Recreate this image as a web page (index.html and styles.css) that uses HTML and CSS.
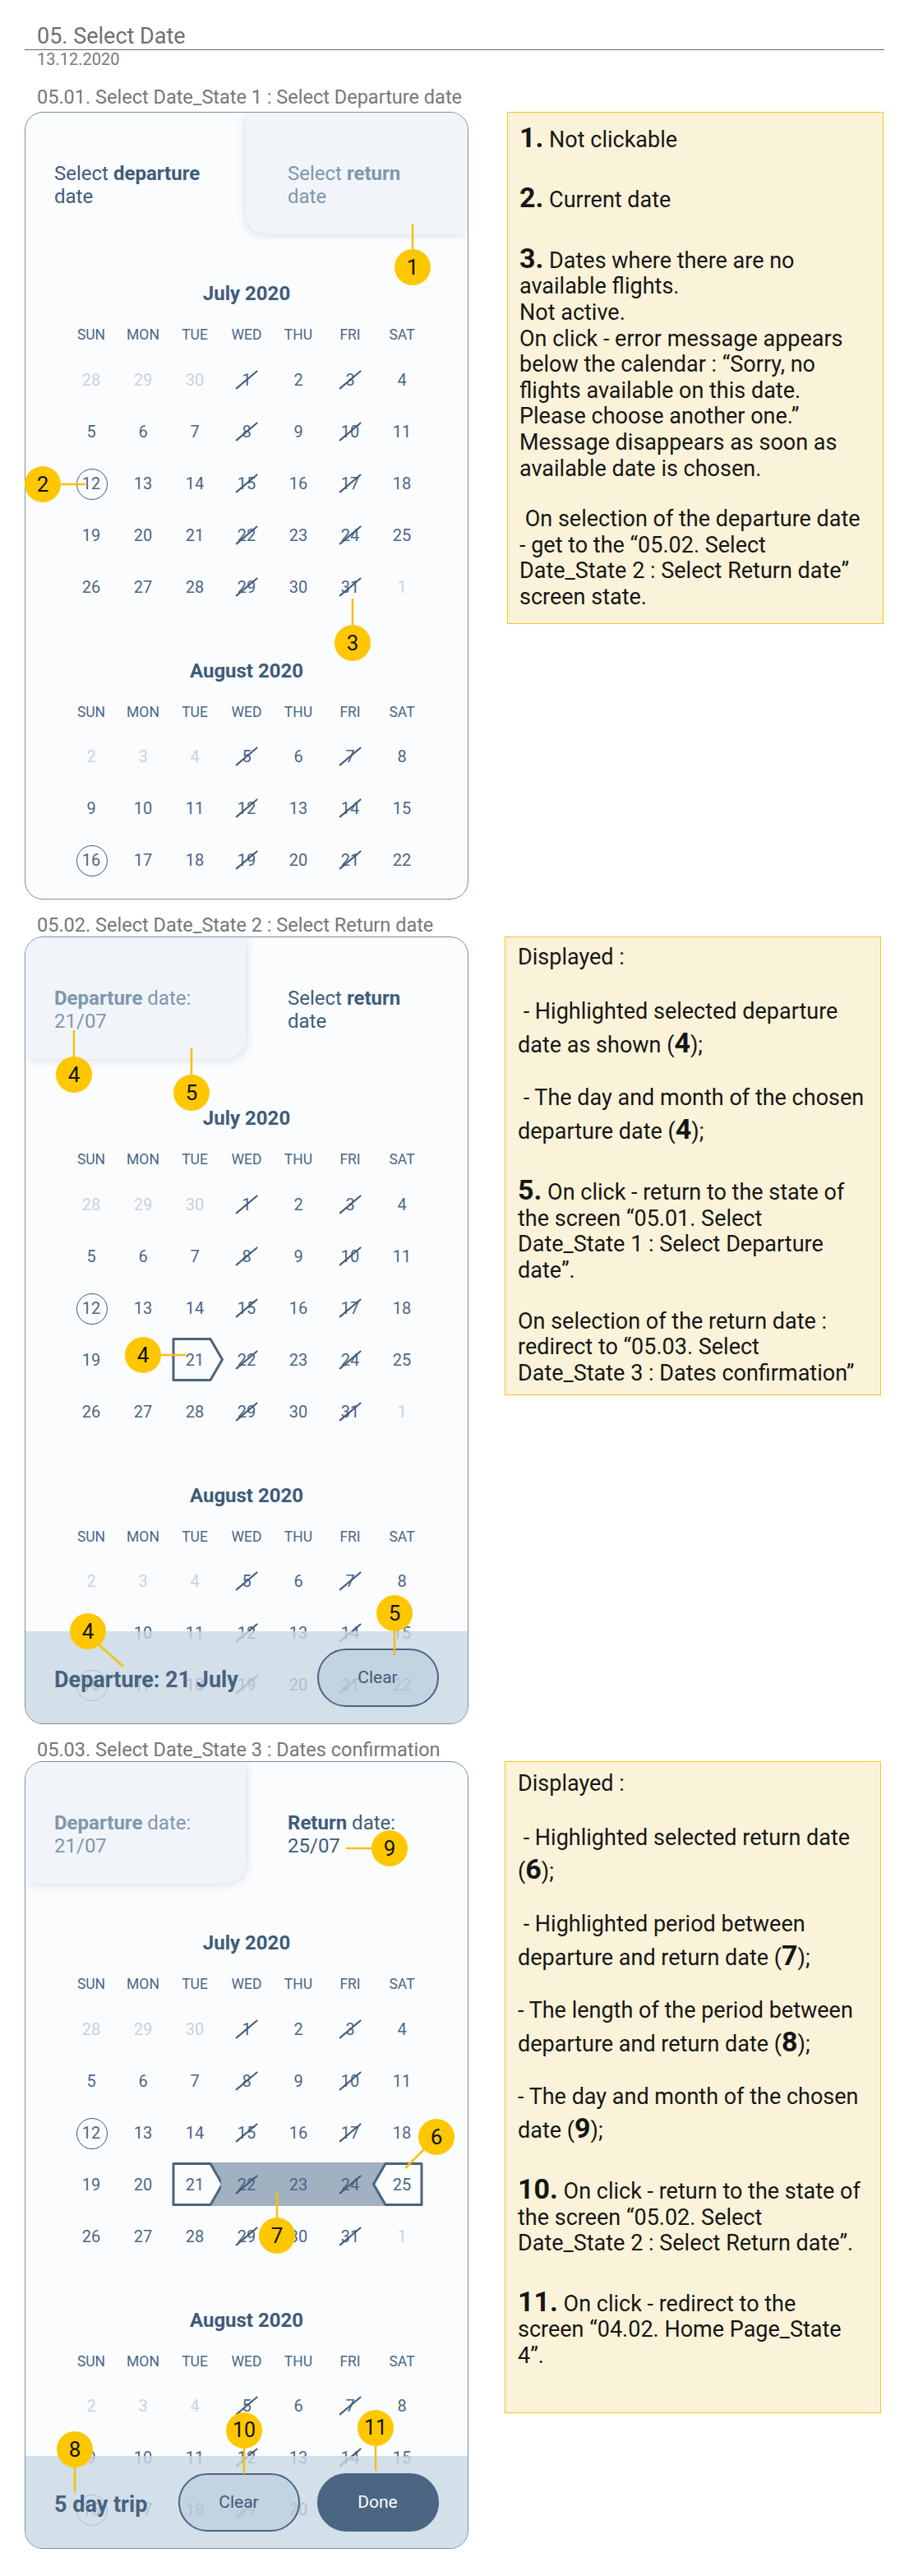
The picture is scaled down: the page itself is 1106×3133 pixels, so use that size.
FILE: index.html
```html
<!DOCTYPE html>
<html lang="en">
<head>
<meta charset="utf-8">
<title>05. Select Date</title>
<link rel="stylesheet" href="styles.css">
</head>
<body>
<div class="page">
  <header class="doc-head">
    <h1>05. Select Date</h1>
    <div class="date">13.12.2020</div>
  </header>

  <!-- STATE 1 -->
  <section class="state s1">
    <h2>05.01. Select Date_State 1 : Select Departure date</h2>
    <div class="row">
      <div class="card">
        <div class="tabs">
          <div class="tab tab-left">Select <b>departure</b><br>date</div>
          <div class="tab tab-right raised">Select <b>return</b><br>date</div>
        </div>
        <div class="month">
          <div class="month-title">July 2020</div>
          <div class="dow"><span>SUN</span><span>MON</span><span>TUE</span><span>WED</span><span>THU</span><span>FRI</span><span>SAT</span></div>
          <div class="days">
            <span class="d off">28</span><span class="d off">29</span><span class="d off">30</span><span class="d x">1</span><span class="d">2</span><span class="d x">3</span><span class="d">4</span>
            <span class="d">5</span><span class="d">6</span><span class="d">7</span><span class="d x">8</span><span class="d">9</span><span class="d x">10</span><span class="d">11</span>
            <span class="d now">12</span><span class="d">13</span><span class="d">14</span><span class="d x">15</span><span class="d">16</span><span class="d x">17</span><span class="d">18</span>
            <span class="d">19</span><span class="d">20</span><span class="d">21</span><span class="d x">22</span><span class="d">23</span><span class="d x">24</span><span class="d">25</span>
            <span class="d">26</span><span class="d">27</span><span class="d">28</span><span class="d x">29</span><span class="d">30</span><span class="d x">31</span><span class="d off">1</span>
          </div>
        </div>
        <div class="month">
          <div class="month-title">August 2020</div>
          <div class="dow"><span>SUN</span><span>MON</span><span>TUE</span><span>WED</span><span>THU</span><span>FRI</span><span>SAT</span></div>
          <div class="days">
            <span class="d off">2</span><span class="d off">3</span><span class="d off">4</span><span class="d x">5</span><span class="d">6</span><span class="d x">7</span><span class="d">8</span>
            <span class="d">9</span><span class="d">10</span><span class="d">11</span><span class="d x">12</span><span class="d">13</span><span class="d x">14</span><span class="d">15</span>
            <span class="d now">16</span><span class="d">17</span><span class="d">18</span><span class="d x">19</span><span class="d">20</span><span class="d x">21</span><span class="d">22</span>
          </div>
        </div>
      </div>
      <div class="note n1">
        <p><b class="num">1.</b> Not clickable</p>
        <p class="mt-l"><b class="num">2.</b> Current date</p>
        <p class="mt-l"><b class="num">3.</b> Dates where there are no<br>available flights.<br>Not active.<br>On click - error message appears<br>below the calendar : “Sorry, no<br>flights available on this date.<br>Please choose another one.”<br>Message disappears as soon as<br>available date is chosen.</p>
        <p class="mt-m">&nbsp;On selection of the departure date<br>- get to the “05.02. Select<br>Date_State 2 : Select Return date”<br>screen state.</p>
      </div>
    </div>
  </section>

  <!-- STATE 2 -->
  <section class="state s2">
    <h2>05.02. Select Date_State 2 : Select Return date</h2>
    <div class="row">
      <div class="card">
        <div class="tabs">
          <div class="tab tab-left raised"><b>Departure</b> date:<br>21/07</div>
          <div class="tab tab-right">Select <b>return</b><br>date</div>
        </div>
        <div class="month">
          <div class="month-title">July 2020</div>
          <div class="dow"><span>SUN</span><span>MON</span><span>TUE</span><span>WED</span><span>THU</span><span>FRI</span><span>SAT</span></div>
          <div class="days">
            <span class="d off">28</span><span class="d off">29</span><span class="d off">30</span><span class="d x">1</span><span class="d">2</span><span class="d x">3</span><span class="d">4</span>
            <span class="d">5</span><span class="d">6</span><span class="d">7</span><span class="d x">8</span><span class="d">9</span><span class="d x">10</span><span class="d">11</span>
            <span class="d now">12</span><span class="d">13</span><span class="d">14</span><span class="d x">15</span><span class="d">16</span><span class="d x">17</span><span class="d">18</span>
            <span class="d">19</span><span class="d">20</span><span class="d start"><svg class="sel" width="64" height="53" viewBox="0 0 64 53"><path d="M2 1.5H47L61.5 26.5L47 51.5H2Z" fill="#fbfcfe" stroke="#48647f" stroke-width="3" stroke-linejoin="round"/></svg><i>21</i></span><span class="d x">22</span><span class="d">23</span><span class="d x">24</span><span class="d">25</span>
            <span class="d">26</span><span class="d">27</span><span class="d">28</span><span class="d x">29</span><span class="d">30</span><span class="d x">31</span><span class="d off">1</span>
          </div>
        </div>
        <div class="month">
          <div class="month-title">August 2020</div>
          <div class="dow"><span>SUN</span><span>MON</span><span>TUE</span><span>WED</span><span>THU</span><span>FRI</span><span>SAT</span></div>
          <div class="days">
            <span class="d off">2</span><span class="d off">3</span><span class="d off">4</span><span class="d x">5</span><span class="d">6</span><span class="d x">7</span><span class="d">8</span>
            <span class="d">9</span><span class="d">10</span><span class="d">11</span><span class="d x">12</span><span class="d">13</span><span class="d x">14</span><span class="d">15</span>
            <span class="d now">16</span><span class="d">17</span><span class="d">18</span><span class="d x">19</span><span class="d">20</span><span class="d x">21</span><span class="d">22</span>
          </div>
        </div>
        <div class="bar">
          <div class="bar-label">Departure: 21 July</div>
          <div class="btn">Clear</div>
        </div>
      </div>
      <div class="note n2">
        <p>Displayed :</p>
        <p class="loose mt-m">&nbsp;- Highlighted selected departure<br>date as shown (<b class="num">4</b>);</p>
        <p class="loose mt-s">&nbsp;- The day and month of the chosen<br>departure date (<b class="num">4</b>);</p>
        <p class="mt-x"><b class="num">5.</b> On click - return to the state of<br>the screen “05.01. Select<br>Date_State 1 : Select Departure<br>date”.</p>
        <p class="mt-m">On selection of the return date :<br>redirect to “05.03. Select<br>Date_State 3 : Dates confirmation”</p>
      </div>
    </div>
  </section>

  <!-- STATE 3 -->
  <section class="state s3">
    <h2>05.03. Select Date_State 3 : Dates confirmation</h2>
    <div class="row">
      <div class="card">
        <div class="tabs">
          <div class="tab tab-left raised"><b>Departure</b> date:<br>21/07</div>
          <div class="tab tab-right"><b>Return</b> date:<br>25/07</div>
        </div>
        <div class="month">
          <div class="month-title">July 2020</div>
          <div class="dow"><span>SUN</span><span>MON</span><span>TUE</span><span>WED</span><span>THU</span><span>FRI</span><span>SAT</span></div>
          <div class="days">
            <span class="d off">28</span><span class="d off">29</span><span class="d off">30</span><span class="d x">1</span><span class="d">2</span><span class="d x">3</span><span class="d">4</span>
            <span class="d">5</span><span class="d">6</span><span class="d">7</span><span class="d x">8</span><span class="d">9</span><span class="d x">10</span><span class="d">11</span>
            <span class="d now">12</span><span class="d">13</span><span class="d">14</span><span class="d x">15</span><span class="d">16</span><span class="d x">17</span><span class="d">18</span>
            <span class="d">19</span><span class="d">20</span><span class="d start"><svg class="sel" width="64" height="53" viewBox="0 0 64 53"><rect x="46" y="0" width="18" height="53" fill="#a1b1c1"/><path d="M2 1.5H47L61.5 26.5L47 51.5H2Z" fill="#fbfcfe" stroke="#48647f" stroke-width="3" stroke-linejoin="round"/></svg><i>21</i></span><span class="d x in">22</span><span class="d in">23</span><span class="d x in">24</span><span class="d end"><svg class="sel" width="62" height="53" viewBox="0 0 62 53"><rect x="0" y="0" width="17" height="53" fill="#a1b1c1"/><path d="M60 1.5H16L1.5 26.5L16 51.5H60Z" fill="#fbfcfe" stroke="#48647f" stroke-width="3" stroke-linejoin="round"/></svg><i>25</i></span>
            <span class="d">26</span><span class="d">27</span><span class="d">28</span><span class="d x">29</span><span class="d">30</span><span class="d x">31</span><span class="d off">1</span>
          </div>
        </div>
        <div class="month">
          <div class="month-title">August 2020</div>
          <div class="dow"><span>SUN</span><span>MON</span><span>TUE</span><span>WED</span><span>THU</span><span>FRI</span><span>SAT</span></div>
          <div class="days">
            <span class="d off">2</span><span class="d off">3</span><span class="d off">4</span><span class="d x">5</span><span class="d">6</span><span class="d x">7</span><span class="d">8</span>
            <span class="d">9</span><span class="d">10</span><span class="d">11</span><span class="d x">12</span><span class="d">13</span><span class="d x">14</span><span class="d">15</span>
            <span class="d now">16</span><span class="d">17</span><span class="d">18</span><span class="d x">19</span><span class="d">20</span><span class="d x">21</span><span class="d">22</span>
          </div>
        </div>
        <div class="bar">
          <div class="bar-label">5 day trip</div>
          <div class="btn">Clear</div>
          <div class="btn primary">Done</div>
        </div>
      </div>
      <div class="note n3">
        <p>Displayed :</p>
        <p class="loose mt-m">&nbsp;- Highlighted selected return date<br>(<b class="num">6</b>);</p>
        <p class="loose mt-s">&nbsp;- Highlighted period between<br>departure and return date (<b class="num">7</b>);</p>
        <p class="loose mt-s">- The length of the period between<br>departure and return date (<b class="num">8</b>);</p>
        <p class="loose mt-s">- The day and month of the chosen<br>date (<b class="num">9</b>);</p>
        <p class="mt-x"><b class="num">10.</b> On click - return to the state of<br>the screen “05.02. Select<br>Date_State 2 : Select Return date”.</p>
        <p class="mt-l"><b class="num">11.</b> On click - redirect to the<br>screen “04.02. Home Page_State<br>4”.</p>
      </div>
    </div>
  </section>

  <svg class="leaders" width="1106" height="3133" viewBox="0 0 1106 3133">
    <g stroke="#f2c10c" stroke-width="2.5" fill="none">
      <line x1="502" y1="272" x2="502" y2="304"/>
      <line x1="74" y1="589" x2="104" y2="589"/>
      <line x1="429" y1="728" x2="429" y2="761"/>
      <line x1="90" y1="1253" x2="90" y2="1286"/>
      <line x1="233" y1="1275" x2="233" y2="1308"/>
      <line x1="195" y1="1648" x2="226" y2="1648"/>
      <line x1="120" y1="2000" x2="150" y2="2027"/>
      <line x1="480" y1="1983" x2="480" y2="2013"/>
      <line x1="421" y1="2248" x2="453" y2="2248"/>
      <line x1="516" y1="2614" x2="493" y2="2637"/>
      <line x1="337" y1="2666" x2="337" y2="2698"/>
      <line x1="91" y1="3000" x2="91" y2="3031"/>
      <line x1="297" y1="2977" x2="297" y2="3009"/>
      <line x1="457" y1="2974" x2="457" y2="3005"/>
    </g>
  </svg>
  <div class="pin pin-1">1</div>
  <div class="pin pin-2">2</div>
  <div class="pin pin-3">3</div>
  <div class="pin pin-4a">4</div>
  <div class="pin pin-5a">5</div>
  <div class="pin pin-4b">4</div>
  <div class="pin pin-4c">4</div>
  <div class="pin pin-5b">5</div>
  <div class="pin pin-9">9</div>
  <div class="pin pin-6">6</div>
  <div class="pin pin-7">7</div>
  <div class="pin pin-8">8</div>
  <div class="pin pin-10">10</div>
  <div class="pin pin-11">11</div>
</div>
</body>
</html>
```

FILE: styles.css
```css
* { box-sizing: border-box; }

body {
  margin: 0;
  background: #ffffff;
  font-family: Roboto, "Liberation Sans", sans-serif;
}

.page {
  position: relative;
  width: 1106px;
  min-height: 3133px;
  padding-top: 29px;
}

/* document header */
.doc-head h1 {
  margin: 0 0 0 30px;
  width: 1046px;
  padding-left: 15px;
  font-size: 27px;
  font-weight: 400;
  line-height: 31px;
  color: #707070;
  border-bottom: 1px solid #666666;
}
.doc-head .date {
  padding-left: 45px;
  font-size: 20px;
  line-height: 22px;
  color: #7a7a7a;
}

/* sections */
.state h2 {
  margin: 18px 0 1px;
  padding-left: 45px;
  font-size: 23.5px;
  font-weight: 400;
  line-height: 26px;
  color: #777777;
  white-space: nowrap;
}
.s1 h2 { margin-top: 22px; margin-bottom: 5px; }

.row {
  display: flex;
  align-items: flex-start;
  padding-left: 30px;
}

/* phone card */
.card {
  position: relative;
  flex: none;
  width: 540px;
  height: 958px;
  border: 1.5px solid #7890a8;
  border-radius: 22px;
  background: #fbfcfe;
  overflow: hidden;
}

.tabs {
  display: grid;
  grid-template-columns: 268px 1fr;
  height: 148px;
}
.tab {
  padding-top: 60px;
  font-size: 24px;
  line-height: 28px;
  color: #3f5c7a;
  white-space: nowrap;
}
.tab b { font-weight: 700; }
.tab-left { padding-left: 35px; }
.tab-right { padding-left: 51px; }
.tab.raised {
  background: #f1f5f9;
  color: #8097ae;
}
.tab-right.raised {
  border-bottom-left-radius: 26px;
  box-shadow: -3px 3px 9px rgba(60, 90, 120, 0.13);
}
.tab-left.raised {
  border-bottom-right-radius: 26px;
  box-shadow: 3px 3px 9px rgba(60, 90, 120, 0.13);
}

/* months */
.month-title {
  margin-top: 57px;
  text-align: center;
  font-size: 24px;
  font-weight: 700;
  line-height: 30px;
  color: #3e5b79;
}
.month + .month .month-title { margin-top: 55.5px; }

.dow {
  display: grid;
  grid-template-columns: repeat(7, 63px);
  width: 441px;
  height: 30px;
  margin: 20px auto 0;
  line-height: 30px;
  text-align: center;
  font-size: 17.5px;
  color: #4b6784;
}

.days {
  display: grid;
  grid-template-columns: repeat(7, 63px);
  grid-auto-rows: 63px;
  width: 441px;
  margin: 8px auto 0;
}

.d {
  position: relative;
  display: flex;
  align-items: center;
  justify-content: center;
  font-size: 20px;
  color: #4b6784;
}
.d i {
  position: relative;
  font-style: normal;
}
.d.off { color: #c9d3de; }

.d.x::after {
  content: "";
  position: absolute;
  left: 50%;
  top: 50%;
  width: 34px;
  height: 1.5px;
  margin: -0.75px 0 0 -17px;
  background: #3e5b79;
  transform: rotate(-40deg);
}
.d.now::before {
  content: "";
  position: absolute;
  left: 50%;
  top: 50%;
  width: 36px;
  height: 36px;
  margin: -18px 0 0 -18px;
  border: 1.5px solid #3e5b79;
  border-radius: 50%;
}

.d .sel {
  position: absolute;
  top: 5px;
  overflow: visible;
}
.d.start .sel { left: 3px; }
.d.end .sel { left: -4.5px; }

.d.in {
  background: linear-gradient(#a1b1c1, #a1b1c1) 0 5px / 100% 53px no-repeat;
}

/* bottom bar overlay */
.bar {
  position: absolute;
  left: 0;
  right: 0;
  bottom: 0;
  height: 112px;
  display: flex;
  align-items: center;
  padding: 0 35.5px 0 35px;
  background: rgba(201, 215, 227, 0.8);
}
.bar-label {
  flex: 1;
  padding-top: 6px;
  font-size: 27px;
  font-weight: 700;
  color: #47637f;
  white-space: nowrap;
}
.btn {
  flex: none;
  width: 148px;
  height: 71px;
  border: 2px solid #4a6682;
  border-radius: 36px;
  display: flex;
  align-items: center;
  justify-content: center;
  font-size: 21px;
  color: #3e5b79;
  background: rgba(176, 198, 216, 0.45);
}
.btn + .btn { margin-left: 21px; }
.btn.primary {
  background: #4a6682;
  color: #ffffff;
}

/* annotation notes */
.note {
  flex: none;
  width: 458px;
  margin-left: 44px;
  border: 1.5px solid #f6c61c;
  background: #fbf3d9;
  font-size: 27px;
  line-height: 31.6px;
  color: #161616;
  white-space: nowrap;
}
.note p { margin: 0; }
.note .loose { line-height: 41px; }
.note .num {
  font-size: 34px;
  font-weight: 700;
  line-height: 0;
}
.note .mt-s { margin-top: 23px; }
.note .mt-m { margin-top: 30px; }
.note .mt-x { margin-top: 38px; }
.note .mt-l { margin-top: 42px; }

.n1 {
  margin-left: 47px;
  padding: 17.7px 14px 15px;
}
.n2 { padding: 8.7px 15px 10px; }
.n3 { padding: 10.5px 15px 52px; }

/* annotation leaders and pins */
.leaders {
  position: absolute;
  left: 0;
  top: 0;
  pointer-events: none;
}
.pin {
  position: absolute;
  width: 44px;
  height: 44px;
  margin: -22px 0 0 -22px;
  border-radius: 50%;
  background: #ffc700;
  color: #111111;
  font-size: 26px;
  line-height: 44px;
  text-align: center;
}
.pin-1 { left: 502px; top: 325px; }
.pin-2 { left: 52px; top: 589px; }
.pin-3 { left: 429px; top: 782px; }
.pin-4a { left: 90px; top: 1307px; }
.pin-5a { left: 233px; top: 1329px; }
.pin-4b { left: 174px; top: 1648px; }
.pin-4c { left: 107px; top: 1984px; }
.pin-5b { left: 480px; top: 1962px; }
.pin-9 { left: 474px; top: 2248px; }
.pin-6 { left: 531px; top: 2599px; }
.pin-7 { left: 337px; top: 2719px; }
.pin-8 { left: 91px; top: 2979px; }
.pin-10 { left: 297px; top: 2956px; font-size: 25px; }
.pin-11 { left: 457px; top: 2953px; font-size: 25px; }
```
